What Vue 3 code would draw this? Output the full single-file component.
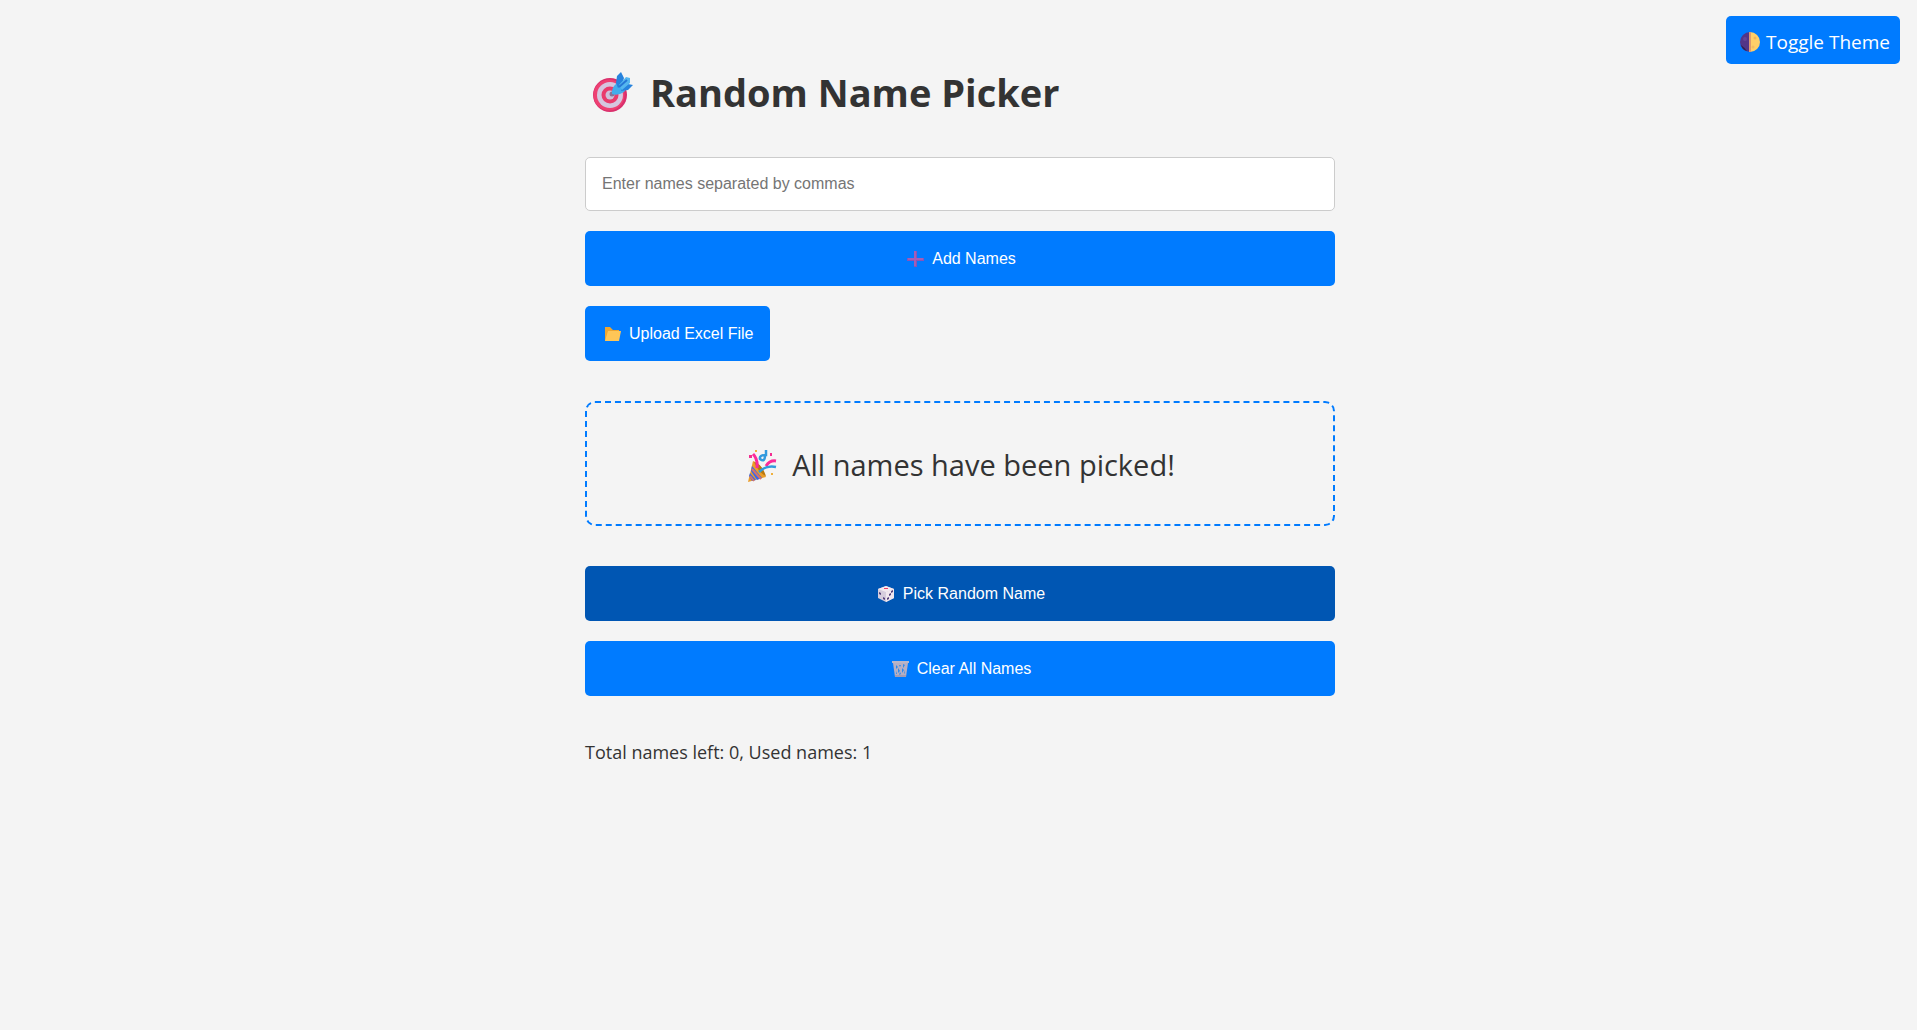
<script setup>
import { ref } from 'vue'

const draft = ref('')
const names = ref([])
const used = ref(['Alex'])
const dark = ref(false)
const message = ref('All names have been picked!')

function addNames() {
  const added = draft.value.split(',').map((n) => n.trim()).filter(Boolean)
  names.value.push(...added)
  draft.value = ''
}

function pickName() {
  if (!names.value.length) {
    message.value = 'All names have been picked!'
    return
  }
  const index = Math.floor(Math.random() * names.value.length)
  const [picked] = names.value.splice(index, 1)
  used.value.push(picked)
  message.value = picked
}

function clearNames() {
  names.value = []
  used.value = []
}
</script>

<template>
  <div class="page" :class="{ dark }">
    <button class="theme" type="button" @click="dark = !dark">
      <svg class="moon" viewBox="0 0 26 24" aria-hidden="true">
        <path d="M14 2a10 10 0 0 0 0 20z" fill="#533587" />
        <path d="M14 2a10 10 0 0 1 0 20z" fill="#ffcf69" />
        <path d="M13 2h2v20h-2z" fill="#dd9a72" />
        <path d="M5 15q3 2 6 6-5-1-6-6z" fill="#30204f" />
        <circle cx="9" cy="9" r="2" fill="#654495" />
        <circle cx="19" cy="8" r="1.5" fill="#efb65c" />
        <circle cx="17" cy="17" r="1.5" fill="#f4bd61" />
      </svg>
      <span>Toggle Theme</span>
    </button>

    <main class="container">
      <h1>
        <svg class="target" viewBox="0 0 55 44" aria-hidden="true">
          <circle cx="25" cy="25" r="17" fill="#d92f6c" />
          <circle cx="24" cy="25" r="15.5" fill="#ee4072" />
          <circle cx="25" cy="25" r="13" fill="#d5c6df" />
          <circle cx="25" cy="25" r="8.5" fill="#e93b6c" />
          <circle cx="25" cy="25" r="4.5" fill="#cec0da" />
          <circle cx="27" cy="24" r="2.5" fill="#8b7197" />
          <path d="M27 24q-1-6 5-11l4-1 6 6-3 4q-6 4-12 2z" fill="#42adec" />
          <path d="M31 13l1-7 4-4 3 6-2 7-4 3zM37 18l6-4 5 1-5 5-7 1z" fill="#2783dd" />
          <path d="M34 15l7-8 4 1v5l-8 7z" fill="#54b6ef" />
          <path d="M34 17l8-7" stroke="#2677d5" stroke-width="2" />
        </svg>
        <span>Random Name Picker</span>
      </h1>

      <form class="controls" @submit.prevent="addNames">
        <input
          v-model="draft"
          class="names"
          type="text"
          aria-label="Names"
          placeholder="Enter names separated by commas"
        />
        <button class="action" type="submit">
          <svg class="icon" viewBox="0 0 22 20" aria-hidden="true">
            <path d="M10 2h3v7h7v3h-7v6h-3v-6H3V9h7z" fill="#8854b8" />
            <path d="M10 2h2v7h7v2h-7v6h-2v-6H4V9h6z" fill="#a35eb6" />
          </svg>
          <span>Add Names</span>
        </button>
        <label class="action upload">
          <svg class="icon" viewBox="0 0 22 20" aria-hidden="true">
            <path d="M4 3h5l3 3h6v3l-2 8H4z" fill="#eda632" />
            <path d="M7 7h13l-2 10H4z" fill="#ffc657" />
          </svg>
          <span>Upload Excel File</span>
          <input class="file" type="file" accept=".xlsx,.xls" />
        </label>
      </form>

      <section class="result" aria-live="polite">
        <svg class="party" viewBox="0 0 38 34" aria-hidden="true">
          <path d="M8 13q8 2 13 16L3 34z" fill="#eb9d29" />
          <path d="M9 14q8 2 12 14-7-3-12-14z" fill="#b9780e" />
          <path d="M7 18l10 12-5 2-6-9zM5 25l6 7-4 1-3-5z" fill="#3e68e7" />
          <path d="M7 21l9 10M5 28l4 5" stroke="#d77468" stroke-width="2" />
          <path d="M8 6q5 5 4 14M21 18q4-6 10-5" fill="none" stroke="#fb2a99" stroke-width="3" />
          <path d="M14 24q7-7 17-5M21 2v5q-7 0-6 4 5 4 5-4" fill="none" stroke="#319add" stroke-width="2.5" />
          <path d="M4 7h3v3H4zM25 5h2v3h-2z" fill="#f32d91" />
          <path d="M10 2h2v2h-2zM26 25h2v2h-2z" fill="#efb03d" />
        </svg>
        <span>{{ message }}</span>
      </section>

      <div class="controls">
        <button class="action picked" type="button" @click="pickName">
          <svg class="icon" viewBox="0 0 22 20" aria-hidden="true">
            <path d="M3 5l8-3 8 3v9l-8 4-8-4z" fill="#d6cddd" />
            <path d="M3 5l8-3 8 3-8 3z" fill="#f2e9ef" />
            <path d="M11 8l8-3v9l-8 4z" fill="#f1e7ee" />
            <path d="M9 4h4v1H9z" fill="#ee3f66" />
            <path d="M4 8l2 1v2l-2-1zM8 13l2 1v2l-2-1zM16 7l2-1v2l-2 1zM12 14l2-1v2l-2 1zM14 10l2-1v2l-2 1z" fill="#56427b" />
          </svg>
          <span>Pick Random Name</span>
        </button>
        <button class="action" type="button" @click="clearNames">
          <svg class="icon" viewBox="0 0 22 20" aria-hidden="true">
            <path d="M4 4h15l-2 14H6z" fill="#b5afc4" />
            <path d="M7 6l2 2-2 2zM10 6h2l-1 2zM14 5l2 1-2 3zM9 9l2 3-2 2zM13 9l2 2-2 3zM7 12l1 3h-1zM11 13l1 2-2 1zM16 11v3l-1 1z" fill="#2f8aeb" />
            <path d="M3 2h17v2H3z" fill="#bbb6c6" />
            <path d="M6 16h11v2H6z" fill="#a49db5" />
          </svg>
          <span>Clear All Names</span>
        </button>
      </div>

      <p class="stats">Total names left: {{ names.length }}, Used names: {{ used.length }}</p>
    </main>
  </div>
</template>

<style>
body {
  margin: 0;
  background: #f4f4f4;
}
</style>

<style scoped>
.page {
  box-sizing: border-box;
  min-height: 100vh;
  padding: 60px 17px 60px 20px;
  background: #f4f4f4;
  color: #333;
  font: 18px/28px "Segoe UI", "Open Sans", "Noto Sans", sans-serif;
}

.page.dark {
  background: #1e1e1e;
  color: #f4f4f4;
}

.container {
  max-width: 750px;
  margin: 0 auto;
}

h1 {
  display: flex;
  align-items: center;
  gap: 10px;
  margin: 0 0 33px;
  font-size: 38px;
  line-height: 64px;
  font-weight: 700;
}

.target {
  width: 55px;
  height: 44px;
}

.controls {
  display: flex;
  flex-direction: column;
  gap: 20px;
}

.names,
.action {
  box-sizing: border-box;
  width: 100%;
  height: 55px;
  padding: 0 16px;
  border-radius: 5px;
  font: 16px/20px Arial, "Liberation Sans", sans-serif;
}

.names {
  height: 54px;
  border: 1px solid #ccc;
  background: #fff;
  color: #333;
}

.names::placeholder {
  color: #757575;
  opacity: 1;
}

.action,
.theme {
  display: flex;
  align-items: center;
  justify-content: center;
  gap: 6px;
  border: 0;
  background: #007bff;
  color: #fff;
  cursor: pointer;
}

.action:hover,
.theme:hover,
.action.picked {
  background: #0056b3;
}

.upload {
  position: relative;
  align-self: flex-start;
  width: auto;
}

.file {
  position: absolute;
  inset: 0;
  width: 100%;
  opacity: 0;
  cursor: pointer;
}

.icon {
  width: 22px;
  height: 20px;
}

.theme {
  position: fixed;
  top: 16px;
  right: 17px;
  height: 48px;
  padding: 4px 10px 0;
  border-radius: 5px;
  gap: 4px;
  font: 19px/28px "Segoe UI", "Open Sans", "Noto Sans", sans-serif;
}

.moon {
  width: 26px;
  height: 24px;
}

.result {
  display: flex;
  align-items: center;
  justify-content: center;
  gap: 9px;
  box-sizing: border-box;
  min-height: 125px;
  margin: 40px 0;
  padding: 32px 30px 30px;
  border: 2px dashed #007bff;
  border-radius: 10px;
  font-size: 29px;
  line-height: 44px;
}

.party {
  width: 38px;
  height: 34px;
}

.stats {
  margin: 42px 0 0;
}
</style>
